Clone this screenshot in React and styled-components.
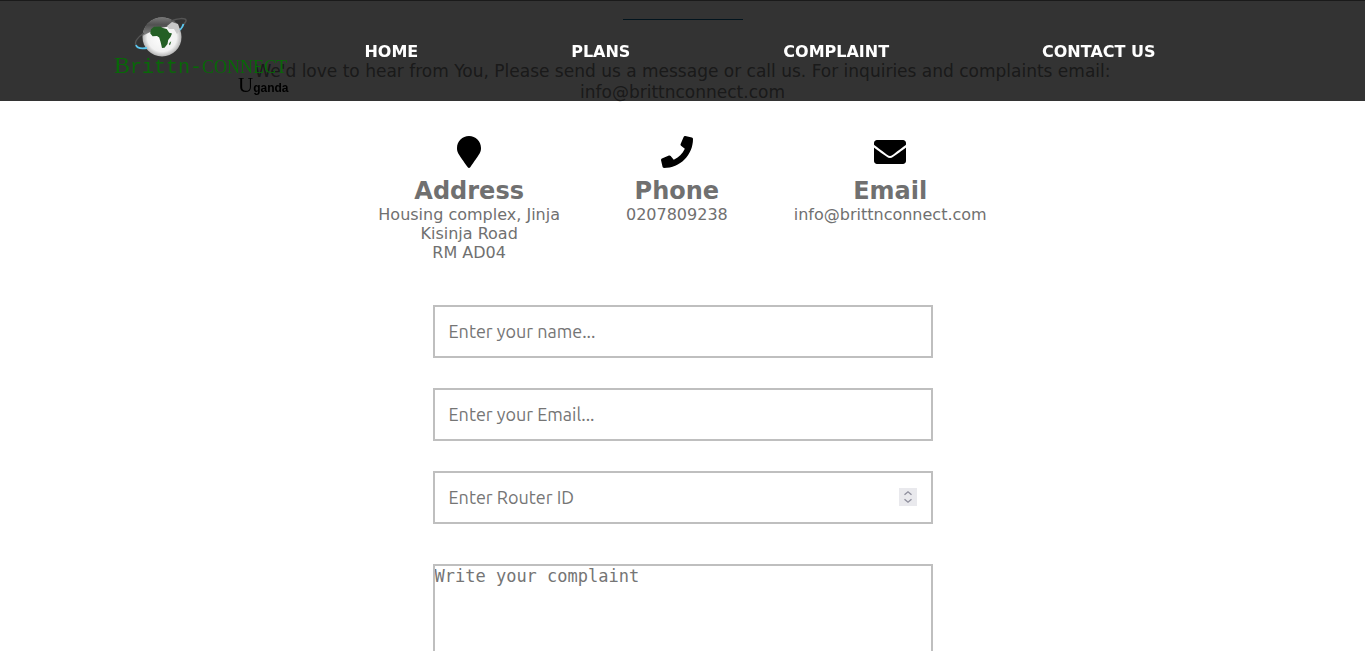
import React from "react";
import styled, { createGlobalStyle } from "styled-components";
import { FaMapMarker, FaPhone, FaEnvelope } from "react-icons/fa";

const GlobalStyle = createGlobalStyle`
  *, *::before, *::after { box-sizing: border-box; margin: 0; padding: 0; }
  body {
    font-family: "DejaVu Sans", sans-serif;
    font-size: 16px;
    background: #fff;
    color: #707070;
  }
`;

const Page = styled.div`
  height: 100vh;
  overflow-y: auto;
  scrollbar-width: none;
`;

const Header = styled.header`
  position: fixed;
  top: 0;
  left: 0;
  right: 0;
  z-index: 10;
  height: 101px;
  display: flex;
  align-items: center;
  padding: 2px 133px 0 114px;
  background: rgba(0, 0, 0, 0.8);
`;

const LogoLink = styled.a`
  display: block;
  flex: none;
  padding-top: 10px;
`;

const LogoArt = styled.svg`
  display: block;
  width: 174px;
  height: 80px;
  overflow: visible;
`;

const Nav = styled.nav`
  flex: 1;
  display: flex;
  justify-content: space-around;
`;

const NavLink = styled.a`
  color: #fff;
  font-weight: bold;
  line-height: 20px;
  text-decoration: none;
  text-transform: uppercase;
  white-space: nowrap;
`;

const Main = styled.main`
  display: flex;
  flex-direction: column;
  align-items: center;
  padding-top: 18px;
  border-top: 1px solid #808080;
`;

const Divider = styled.hr`
  width: 120px;
  height: 1px;
  border: 0;
  background: #0a6496;
`;

const Intro = styled.p`
  width: 65%;
  margin-top: 41px;
  font-size: 17px;
  line-height: 21px;
  color: #808080;
  text-align: center;
`;

const Contacts = styled.section`
  display: flex;
  justify-content: center;
  gap: 66px;
  margin-top: 33px;
`;

const Contact = styled.div`
  display: flex;
  flex-direction: column;
  align-items: center;
  text-align: center;

  svg { color: #000; font-size: 32px; }
`;

const ContactTitle = styled.h2`
  margin-top: 9px;
  font-size: 24px;
  line-height: 28px;
`;

const ContactLine = styled.p`
  line-height: 19px;
`;

const Form = styled.form`
  width: 500px;
  max-width: 90%;
  display: flex;
  flex-direction: column;
  gap: 30px;
  margin-top: 43px;
  padding-bottom: 40px;
`;

const Field = styled.label`
  position: relative;
  display: block;
`;

const Input = styled.input`
  display: block;
  width: 100%;
  height: 53px;
  padding: 0 14px 2px;
  border: 2px solid #bfbfbf;
  background: #fff;
  font-family: Ubuntu, "Noto Sans", sans-serif;
  font-size: 18px;
  color: #333;
  appearance: textfield;

  &::placeholder { color: #757575; opacity: 1; }
  &::-webkit-inner-spin-button { display: none; }
`;

const Stepper = styled.span`
  position: absolute;
  top: 17px;
  right: 16px;
  width: 18px;
  height: 18px;
  background: #e9e9ed;

  svg { display: block; }
`;

const Message = styled.textarea`
  display: block;
  width: 100%;
  height: 200px;
  margin-top: 10px;
  border: 2px solid #bfbfbf;
  font-family: "DejaVu Sans Mono", monospace;
  font-size: 17px;
  line-height: 20px;
  resize: none;

  &::placeholder { color: #757575; opacity: 1; }
`;

function Logo() {
  return (
    <LogoArt viewBox="0 0 174 80" role="img" aria-label="Brittn-Connect Uganda">
      <defs>
        <radialGradient id="globe" cx="0.5" cy="0.5" r="0.5">
          <stop offset="0" stopColor="#fff" />
          <stop offset="0.75" stopColor="#f1f1f1" />
          <stop offset="1" stopColor="#b4b4b4" />
        </radialGradient>
        <linearGradient id="shade" x1="0" y1="0" x2="0" y2="1">
          <stop offset="0" stopColor="#777" />
          <stop offset="0.4" stopColor="#505050" />
          <stop offset="1" stopColor="#8a8a8a" />
        </linearGradient>
      </defs>
      <circle cx="48" cy="20" r="19.5" fill="url(#globe)" />
      <path d="M28.7 19 C29 8 37 0.5 48 0.5 C56 0.5 61.5 4 65 9 C55 9 48 10 41 13 C36 15 32 17 28.7 19Z" fill="url(#shade)" />
      <path d="M53 9 L58 5 L64 7 L66 13 L63 17 L60 12 L55 12Z" fill="#c8c8c8" />
      <path d="M37 12.3 L40 9.8 L46.7 9.4 L48 10.8 L52.7 12 L55.2 15.8 L58 16.5 L56.5 20 L54.2 23 L53.5 27 L50.5 30.7 L48 31 L46.6 25 L45.2 20.5 L43 19 L38.6 19.2 L36.2 16.3Z" fill="#245f25" />
      <path d="M57.2 24.2 L55.3 26 L55 28.2 L56.3 27.5Z" fill="#245f25" />
      <path d="M22 28 C20 25 24 20 30 16" fill="none" stroke="#555" strokeWidth="1.3" />
      <path d="M57 4 C64 1 71 1 72 3 C72.5 4.5 71 6 69 8" fill="none" stroke="#555" strokeWidth="1.5" />
      <path d="M22 28 C23 31.5 27 32 33 31" fill="none" stroke="#5cc8f0" strokeWidth="1.8" />
      <path d="M69.5 7 C69 9 67.8 11 66 13" fill="none" stroke="#5cc8f0" strokeWidth="1.8" />
      <text x="0" y="56" fontFamily="Liberation Serif, serif" fontSize="24" fill="#086808">
        B<tspan fontFamily="Liberation Mono, monospace" fontSize="20">rittn-</tspan><tspan fontSize="18">CONNECT</tspan>
      </text>
      <text x="124" y="75" fontFamily="Liberation Serif, serif" fontSize="21" fill="#000">
        U<tspan fontFamily="Liberation Sans Narrow, Liberation Sans, sans-serif" fontSize="12" fontWeight="bold">ganda</tspan>
      </text>
    </LogoArt>
  );
}

const links = ["Home", "Plans", "Complaint", "Contact us"];

const contacts = [
  { title: "Address", Icon: FaMapMarker, lines: ["Housing complex, Jinja", "Kisinja Road", "RM AD04"] },
  { title: "Phone", Icon: FaPhone, lines: ["0207809238"] },
  { title: "Email", Icon: FaEnvelope, lines: ["info@brittnconnect.com"] },
];

export default function App() {
  return (
    <Page>
      <GlobalStyle />
      <Header>
        <LogoLink href="#home"><Logo /></LogoLink>
        <Nav>
          {links.map((name) => (
            <NavLink key={name} href={"#" + name.toLowerCase().replace(" ", "-")}>{name}</NavLink>
          ))}
        </Nav>
      </Header>
      <Main>
        <Divider />
        <Intro>
          We'd love to hear from You, Please send us a message or call us. For inquiries and
          complaints email: info@brittnconnect.com
        </Intro>
        <Contacts>
          {contacts.map(({ title, Icon, lines }) => (
            <Contact key={title}>
              <Icon />
              <ContactTitle>{title}</ContactTitle>
              {lines.map((line) => <ContactLine key={line}>{line}</ContactLine>)}
            </Contact>
          ))}
        </Contacts>
        <Form>
          <Field><Input type="text" aria-label="Name" placeholder="Enter your name..." /></Field>
          <Field><Input type="email" aria-label="Email" placeholder="Enter your Email..." /></Field>
          <Field>
            <Input type="number" aria-label="Router ID" placeholder="Enter Router ID" />
            <Stepper aria-hidden="true">
              <svg width="18" height="18" viewBox="0 0 18 18" fill="none" stroke="#8f8f9d" strokeWidth="1.4">
                <path d="M5.5 6.8 L9 3.8 L12.5 6.8" />
                <path d="M5.5 11.2 L9 14.2 L12.5 11.2" />
              </svg>
            </Stepper>
          </Field>
          <Field><Message aria-label="Complaint" placeholder="Write your complaint" /></Field>
        </Form>
      </Main>
    </Page>
  );
}
